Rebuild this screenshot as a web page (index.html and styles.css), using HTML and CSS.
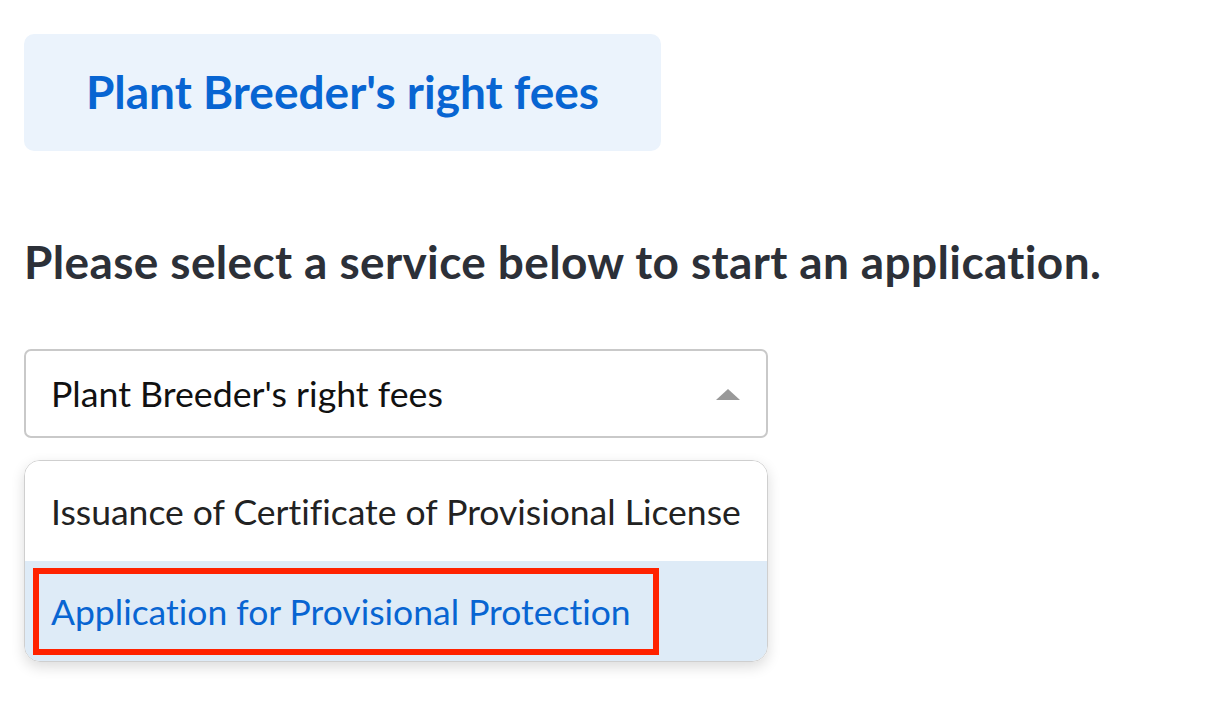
FILE: index.html
```html
<!DOCTYPE html>
<html>
<head>
<meta charset="utf-8">
<link rel="stylesheet" href="styles.css">
</head>
<body>
<main class="page">
  <div class="category-badge">Plant Breeder's right fees</div>
  <h2 class="prompt">Please select a service below to start an application.</h2>
  <div class="select">
    <div class="select-control">
      <span class="select-value">Plant Breeder's right fees</span>
      <span class="select-arrow"></span>
    </div>
    <ul class="select-menu">
      <li class="option">Issuance of Certificate of Provisional License</li>
      <li class="option option-active">Application for Provisional Protection<span class="highlight-box"></span></li>
    </ul>
  </div>
</main>
</body>
</html>
```

FILE: styles.css
```css
* { box-sizing: border-box; }
html, body { margin: 0; padding: 0; background: #fff; }
body {
  font-family: Lato, "Noto Sans", "Open Sans", sans-serif;
  font-variant-ligatures: none;
}
.page { padding: 34px 24px; }
.category-badge {
  width: 637px;
  height: 117px;
  background: #ebf3fc;
  border-radius: 10px;
  display: flex;
  align-items: center;
  justify-content: center;
  color: #0865d2;
  font-weight: 700;
  font-size: 46px;
  padding-bottom: 2px;
}
.prompt {
  margin: 83px 0 0;
  font-size: 46px;
  font-weight: 700;
  color: #2c3038;
  line-height: 56px;
  letter-spacing: 0.37px;
}
.select { margin-top: 59px; width: 744px; }
.select-control {
  height: 89px;
  border: 2px solid #c9c9c9;
  border-radius: 7px;
  display: flex;
  align-items: center;
  justify-content: space-between;
  padding: 0 26px 0 25px;
}
.select-value { font-size: 35.7px; color: #111; }
.select-arrow {
  width: 0; height: 0;
  border-left: 12px solid transparent;
  border-right: 12px solid transparent;
  border-bottom: 11px solid #999;
  margin-top: 2px;
}
.select-menu {
  list-style: none;
  margin: 22px 0 0;
  padding: 0;
  border: 1.5px solid #cfcfcf;
  border-radius: 16px;
  overflow: hidden;
  box-shadow: 0 5px 14px rgba(0,0,0,0.14);
}
.option {
  position: relative;
  height: 100px;
  display: flex;
  align-items: center;
  padding-left: 26px;
  font-size: 35.5px;
  color: #222;
  background: #fff;
}
.option-active { background: #deebf7; color: #0865d2; }
.highlight-box {
  position: absolute;
  left: 8px;
  top: 7px;
  width: 626px;
  height: 87px;
  border: 6px solid #ff2200;
}
```
